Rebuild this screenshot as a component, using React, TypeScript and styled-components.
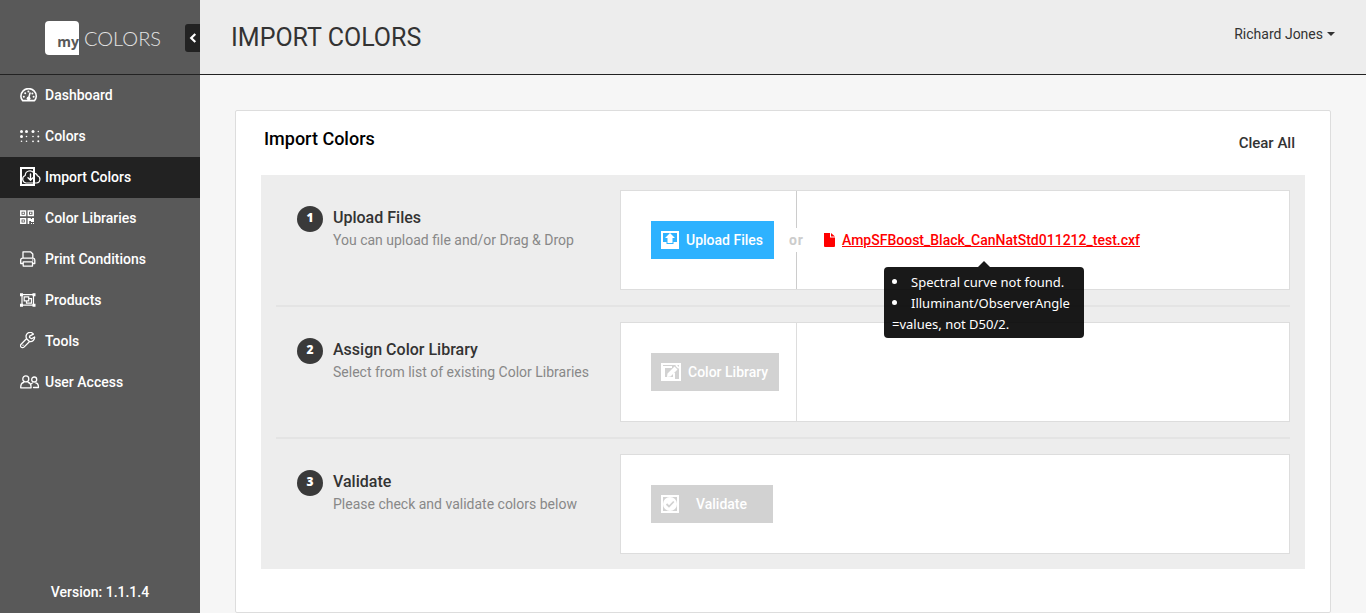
import React from 'react';
import styled, { createGlobalStyle } from 'styled-components';

const GlobalStyle = createGlobalStyle`
  *, *::before, *::after { box-sizing: border-box; }
  body {
    margin: 0;
    background: #f6f6f6;
    color: #333;
    font: 400 14px/20px Roboto, "Liberation Sans", sans-serif;
  }
  h1, h2, h3, p, ul { margin: 0; padding: 0; }
  button { font: inherit; border: 0; padding: 0; background: none; cursor: pointer; }
  svg { display: block; flex: none; }
`;

const Shell = styled.div`
  display: flex;
  min-height: 100vh;
`;

const Sidebar = styled.aside`
  display: flex;
  flex-direction: column;
  flex: 0 0 200px;
  background: #595959;
  color: #fff;
`;

const Brand = styled.div`
  display: flex;
  align-items: center;
  justify-content: space-between;
  height: 75px;
  padding: 2px 0 0 45px;
  border-bottom: 1px solid #222;
`;

const Logo = styled.a`
  display: flex;
  align-items: center;
  gap: 5px;
  color: #e4e4e4;
  text-decoration: none;
  font: 300 20px/34px Lato, sans-serif;
`;

const LogoMark = styled.span`
  display: flex;
  align-items: flex-end;
  justify-content: flex-end;
  width: 34px;
  height: 34px;
  padding-bottom: 2px;
  border-radius: 4px 4px 0 4px;
  background: #fff;
  color: #595959;
  font: 700 14px/22px "Open Sans", sans-serif;
`;

const Collapse = styled.button`
  display: flex;
  align-items: center;
  justify-content: center;
  width: 15px;
  height: 28px;
  border-radius: 3px 0 0 3px;
  background: #222;
  color: #fff;
`;

const Nav = styled.nav`
  display: flex;
  flex-direction: column;
  flex: 1;
`;

const NavLink = styled.a<{ $active?: boolean }>`
  display: flex;
  align-items: center;
  height: 41px;
  padding: 0 0 2px 20px;
  background: ${({ $active }) => ($active ? '#222' : 'transparent')};
  color: #fff;
  font-weight: 500;
  text-decoration: none;
`;

const NavIcon = styled.span`
  display: flex;
  width: 25px;
`;

const Version = styled.p`
  padding: 11px 0;
  text-align: center;
  font-weight: 500;
`;

const Main = styled.main`
  flex: 1;
  min-width: 0;
`;

const TopBar = styled.header`
  display: flex;
  align-items: center;
  justify-content: space-between;
  height: 75px;
  padding: 2px 31px 0;
  border-bottom: 1px solid #222;
  background: #ededed;
`;

const PageTitle = styled.h1`
  font-size: 25px;
  line-height: 32px;
  font-weight: 400;
`;

const UserMenu = styled.button`
  display: flex;
  align-items: center;
  gap: 4px;
  padding-bottom: 8px;
  color: #333;
`;

const Caret = styled.span`
  border: 4px solid transparent;
  border-top-color: #333;
  border-bottom: 0;
`;

const Card = styled.section`
  margin: 35px 35px 0;
  padding: 16px 25px 43px;
  border: 1px solid #ddd;
  border-radius: 2px;
  background: #fff;
`;

const CardHead = styled.div`
  display: flex;
  align-items: flex-start;
  justify-content: space-between;
  height: 48px;
  padding: 0 10px 0 3px;
`;

const CardTitle = styled.h2`
  color: #000;
  font-size: 18px;
  line-height: 24px;
  font-weight: 500;
`;

const ClearButton = styled.button`
  padding: 6px 0;
  color: #333;
  font-size: 15px;
  font-weight: 500;
`;

const Steps = styled.div`
  padding: 0 15px;
  background: #ededed;
`;

const Step = styled.div`
  display: flex;
  padding: 15px 0;

  & + & { border-top: 2px solid #e4e4e4; }
`;

const StepInfo = styled.div`
  display: flex;
  flex: 0 0 344px;
  gap: 10px;
  padding: 16px 0 0 21px;
`;

const StepNumber = styled.span`
  display: flex;
  align-items: center;
  justify-content: center;
  flex: none;
  width: 26px;
  height: 26px;
  padding-bottom: 2px;
  border-radius: 50%;
  background: #3a3a3a;
  color: #fff;
  font: 800 12px/18px "Open Sans", sans-serif;
`;

const StepTitle = styled.h3`
  font-size: 16px;
  line-height: 24px;
  font-weight: 500;
`;

const StepHint = styled.p`
  line-height: 20px;
  color: #888;
`;

const StepBox = styled.div`
  display: flex;
  flex: 1;
  min-width: 0;
  height: 100px;
  border: 1px solid #ddd;
  background: #fff;
`;

const ActionCell = styled.div<{ $line?: string }>`
  position: relative;
  display: flex;
  align-items: center;
  flex: 0 0 176px;
  padding-left: 30px;
  border-right: 1px solid ${({ $line }) => $line ?? 'transparent'};
`;

const ActionButton = styled.button<{ $muted?: boolean; $wide?: boolean }>`
  display: flex;
  align-items: center;
  gap: ${({ $wide }) => ($wide ? '17px' : '7px')};
  height: 38px;
  padding: 0 ${({ $wide }) => ($wide ? '26px' : '11px')} 0 10px;
  background: ${({ $muted }) => ($muted ? '#d2d2d2' : '#2eb2ff')};
  color: #fff;
  font-weight: 500;
  white-space: nowrap;
`;

const Or = styled.span`
  position: absolute;
  right: -8px;
  top: 37px;
  padding: 2px 0;
  background: #fff;
  color: #ccc;
  font-weight: 700;
  letter-spacing: 1px;
`;

const FileCell = styled.div`
  display: flex;
  align-items: center;
  padding-left: 27px;
`;

const FileEntry = styled.div`
  position: relative;
  display: flex;
  align-items: center;
  gap: 7px;
`;

const FileLink = styled.a`
  color: #f00;
  font-weight: 500;
`;

const Tooltip = styled.div`
  position: absolute;
  top: 37px;
  left: 60px;
  width: 200px;
  padding: 5px 8px 3px;
  border-radius: 4px;
  background: rgba(0, 0, 0, 0.9);
  color: #fff;
  font: 400 13px/21px "Noto Sans", sans-serif;

  &::before {
    content: "";
    position: absolute;
    left: 94px;
    bottom: 100%;
    border: 6px solid transparent;
    border-top: 0;
    border-bottom-color: rgba(0, 0, 0, 0.9);
  }
`;

const Issues = styled.ul`
  list-style: none;
`;

const Issue = styled.li`
  overflow-wrap: anywhere;

  &::before {
    content: "";
    display: inline-block;
    width: 5px;
    height: 5px;
    margin-right: 14px;
    border-radius: 50%;
    background: #fff;
    vertical-align: 3px;
  }
`;

const line = { fill: 'none', stroke: 'currentColor', strokeLinecap: 'round', strokeLinejoin: 'round' } as const;

const DashboardIcon = () => (
  <svg width="18" height="14" viewBox="0 0 18 14">
    <path {...line} strokeWidth="1.600" d="M2.700 12.600h11.900A7.500 7.500 0 0 0 16.300 8.300 7.700 7.700 0 0 0 .9 8.300c0 1.700.7 3.200 1.800 4.300z" />
    <path {...line} strokeWidth="1.500" d="M8.700 10l1.300-5" />
    <circle cx="8.600" cy="10.300" r="1.900" fill="currentColor" />
    <g fill="currentColor">
      <circle cx="3.800" cy="8.800" r="1" /><circle cx="5.200" cy="5.300" r="1" />
      <circle cx="8.400" cy="3.600" r="1" /><circle cx="12.400" cy="5.500" r="1" /><circle cx="13.600" cy="8.800" r="1" />
    </g>
  </svg>
);

const dots: [number, number, number][] = [
  [1.5, 2.5, 1.5], [6.5, 2.5, 1.5], [13, 2.5, 1.5], [18.300, 2.500, 0.700],
  [1.5, 7.5, 1.5], [6.5, 7.5, 0.8], [13, 7.5, 0.8], [18.300, 7.500, 1],
  [1.500, 12.300, 0.800], [6.500, 12.300, 0.800], [13, 12.300, 0.900], [18.300, 12.300, 1],
];

const DotsIcon = () => (
  <svg width="20" height="14" viewBox="0 0 20 14" fill="currentColor">
    {dots.map(([x, y, r]) => <circle key={`${x}-${y}`} cx={x} cy={y} r={r} />)}
  </svg>
);

const CloudIcon = () => (
  <svg width="22" height="19" viewBox="0 0 22 19">
    <rect x="1" y="1" width="13" height="17" fill="none" stroke="currentColor" strokeWidth="2" />
    <path {...line} strokeWidth="1.200" d="M6 16h10.500a3.700 3.700 0 0 0 .9-7.200A3.200 3.200 0 0 0 14 6.300 4.700 4.700 0 0 0 5.200 8.500 3.900 3.900 0 0 0 6 16z" />
    <path {...line} strokeWidth="1.400" d="M10.500 7v6M8 10.800l2.500 2.500 2.500-2.500" />
  </svg>
);

const QrIcon = () => (
  <svg width="15" height="15" viewBox="0 0 15 15">
    <g fill="none" stroke="currentColor" strokeWidth="1.500">
      <path d="M.8 1h4.700v4.500H.8zM8.300 1h4.900v4.500H8.300zM.8 8.800h4.700v4.400H.8z" />
    </g>
    <path fill="currentColor" d="M2.500 2.600h1.400v1.400H2.500zM10 2.600h1.400v1.400H10zM2.500 10.300h1.400v1.400H2.500zM7.600 8h3.200v1h1.200V8h2v4h-3v-1h-1.800v3H7.600zM11 13h1v1h-1zM13 13h1v1h-1z" />
  </svg>
);

const PrinterIcon = () => (
  <svg width="16" height="16" viewBox="0 0 16 16">
    <path {...line} strokeWidth="1.300" d="M3 7V.8h7.500L12.800 3v4M3 12.500H.7V9A1.800 1.800 0 0 1 2.500 7.200h10.600A1.800 1.800 0 0 1 14.800 9v3.500h-2M3.200 10.800h9.300v4.300H3.200zM12.700 9h.2" />
  </svg>
);

const ProductsIcon = () => (
  <svg width="16" height="14" viewBox="0 0 16 14">
    <g fill="none" stroke="currentColor" strokeWidth="1.200">
      <path d="M2 1.700h11.500v10.500H2zM4.200 3.800h4.500v4H4.200z" />
      <path d="M8.700 5.700h2.800v4.500H6.500V8" />
    </g>
    <path fill="currentColor" d="M0 .2h3v3H0zM12.500.2h3v3h-3zM0 10.800h3v3H0zM12.500 10.800h3v3h-3z" />
  </svg>
);

const WrenchIcon = () => (
  <svg width="16" height="17" viewBox="0 0 16 17">
    <path {...line} strokeWidth="1.300" d="M13.400 2.200A3.900 3.900 0 0 0 6.700 6.500L1.100 12.200a2 2 0 0 0 2.900 2.900L9.600 9.500a4.100 4.100 0 0 0 5-4.500l-3 1.700-2.100-1.200.1-1.300zM6.900 7l2.300 2.300M3 13.200h.1" />
  </svg>
);

const UsersIcon = () => (
  <svg width="20" height="14" viewBox="0 0 20 14">
    <g {...line} strokeWidth="1.300">
      <circle cx="5.800" cy="3.900" r="3" /><circle cx="14.200" cy="4.500" r="2.500" />
      <path d="M3.500 7.500C1.500 7.800.7 9.200.7 12.800h10.400c0-3.500-.8-5-2.800-5.300M12.400 8c-.8.300-1.300.7-1.600 1.400M15.900 8c1.900.3 2.600 1.500 2.600 4.500h-5" />
    </g>
  </svg>
);

const UploadIcon = () => (
  <svg width="18" height="18" viewBox="0 0 18 18">
    <rect x="1" y="1" width="16" height="16" fill="none" stroke="currentColor" strokeWidth="2" />
    <path fill="currentColor" d="M9 2l5 5h-2.500v5h-5V7H4zM2 11h3.500v2h7v-2H16v5H2z" />
  </svg>
);

const EditIcon = () => (
  <svg width="20" height="18" viewBox="0 0 20 18">
    <rect x="1" y="1" width="18" height="16" fill="none" stroke="currentColor" strokeWidth="2" />
    <path fill="none" stroke="currentColor" strokeWidth="2" d="M11 4H3v11h10v-5" />
    <path fill="currentColor" d="M6.500 10.500l7-7 3 3-7 7-3.500.500zM14.300 2.700L15.500 1.500l3 3-1.200 1.200z" />
  </svg>
);

const CheckIcon = () => (
  <svg width="18" height="18" viewBox="0 0 18 18">
    <rect x="1" y="1" width="16" height="16" fill="none" stroke="currentColor" strokeWidth="2" />
    <circle cx="9" cy="9" r="7" fill="currentColor" />
    <path d="M5.500 9l2.500 2.500 4.800-5" fill="none" stroke="#d2d2d2" strokeWidth="1.800" />
  </svg>
);

const FileIcon = () => (
  <svg width="11" height="14" viewBox="0 0 11 14" fill="#f00">
    <path d="M0 0h6v4.500h5V13a1 1 0 0 1-1 1H1a1 1 0 0 1-1-1zM7 0l4 3.500H7z" />
  </svg>
);

const navItems = [
  { label: 'Dashboard', Icon: DashboardIcon },
  { label: 'Colors', Icon: DotsIcon },
  { label: 'Import Colors', Icon: CloudIcon, active: true },
  { label: 'Color Libraries', Icon: QrIcon },
  { label: 'Print Conditions', Icon: PrinterIcon },
  { label: 'Products', Icon: ProductsIcon },
  { label: 'Tools', Icon: WrenchIcon },
  { label: 'User Access', Icon: UsersIcon },
];

interface StepRowProps {
  number: number;
  title: string;
  hint: string;
  children: React.ReactNode;
}

const StepRow = ({ number, title, hint, children }: StepRowProps) => (
  <Step>
    <StepInfo>
      <StepNumber>{number}</StepNumber>
      <div>
        <StepTitle>{title}</StepTitle>
        <StepHint>{hint}</StepHint>
      </div>
    </StepInfo>
    <StepBox>{children}</StepBox>
  </Step>
);

export default function App() {
  return (
    <>
      <GlobalStyle />
      <Shell>
        <Sidebar>
          <Brand>
            <Logo href="#"><LogoMark>my</LogoMark>COLORS</Logo>
            <Collapse aria-label="Collapse menu">
              <svg width="8" height="10" viewBox="0 0 8 10">
                <path d="M6.300 1L2.200 5l4.100 4" fill="none" stroke="currentColor" strokeWidth="2.200" />
              </svg>
            </Collapse>
          </Brand>
          <Nav>
            {navItems.map(({ label, Icon, active }) => (
              <NavLink key={label} href="#" $active={active}>
                <NavIcon><Icon /></NavIcon>{label}
              </NavLink>
            ))}
          </Nav>
          <Version>Version: 1.1.1.4</Version>
        </Sidebar>
        <Main>
          <TopBar>
            <PageTitle>IMPORT COLORS</PageTitle>
            <UserMenu>Richard Jones<Caret /></UserMenu>
          </TopBar>
          <Card>
            <CardHead>
              <CardTitle>Import Colors</CardTitle>
              <ClearButton>Clear All</ClearButton>
            </CardHead>
            <Steps>
              <StepRow number={1} title="Upload Files" hint="You can upload file and/or Drag & Drop">
                <ActionCell $line="#ccc">
                  <ActionButton><UploadIcon />Upload Files</ActionButton>
                  <Or>or</Or>
                </ActionCell>
                <FileCell>
                  <FileEntry>
                    <FileIcon />
                    <FileLink href="#">AmpSFBoost_Black_CanNatStd011212_test.cxf</FileLink>
                    <Tooltip role="tooltip">
                      <Issues>
                        <Issue>Spectral curve not found.</Issue>
                        <Issue>Illuminant/ObserverAngle<wbr />=values, not D50/2.</Issue>
                      </Issues>
                    </Tooltip>
                  </FileEntry>
                </FileCell>
              </StepRow>
              <StepRow number={2} title="Assign Color Library" hint="Select from list of existing Color Libraries">
                <ActionCell $line="#ddd">
                  <ActionButton $muted><EditIcon />Color Library</ActionButton>
                </ActionCell>
              </StepRow>
              <StepRow number={3} title="Validate" hint="Please check and validate colors below">
                <ActionCell>
                  <ActionButton $muted $wide><CheckIcon />Validate</ActionButton>
                </ActionCell>
              </StepRow>
            </Steps>
          </Card>
        </Main>
      </Shell>
    </>
  );
}
